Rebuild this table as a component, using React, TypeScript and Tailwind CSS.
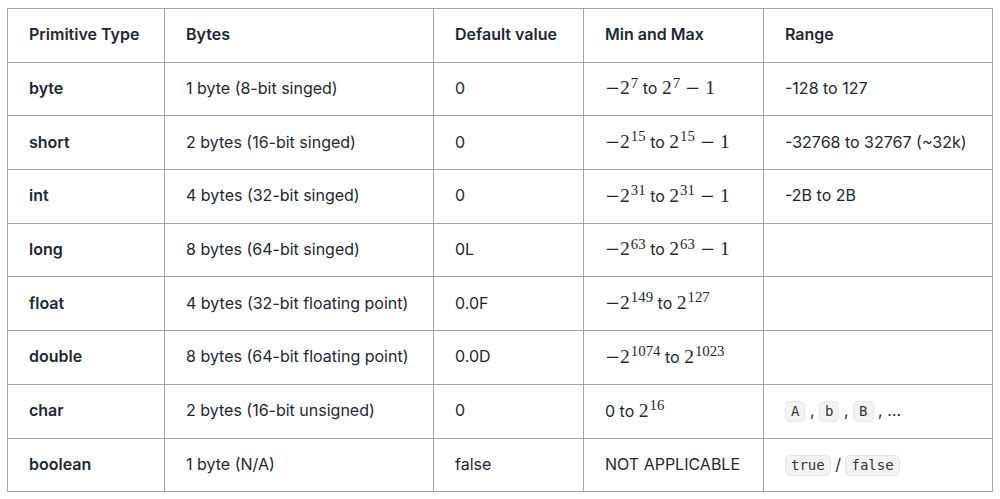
import React from 'react';

type Row = {
  type: string;
  bytes: string;
  def: string;
  minmax: React.ReactNode;
  range: React.ReactNode;
};

const Pow = ({ exp }: { exp: string }) => (
  <span>
    2<sup className="relative top-[0.05em] ml-[1px] align-super text-[0.76em] leading-none">{exp}</sup>
  </span>
);

const Math = ({ children }: { children: React.ReactNode }) => (
  <span className="text-[19.5px]" style={{ fontFamily: '"Liberation Serif", "DejaVu Serif", serif' }}>
    {children}
  </span>
);

const Minus = ({ binary = false }: { binary?: boolean }) => (
  <span
    className={binary ? 'mx-[5px] text-[18px] font-light' : 'text-[18px] font-light'}
    style={{ fontFamily: '"DejaVu Serif", serif' }}
  >
    −
  </span>
);

const MinMax = ({ lo, hi, minusOne = true }: { lo: string; hi: string; minusOne?: boolean }) => (
  <span>
    <Math>
      <Minus />
      <Pow exp={lo} />
    </Math>{' '}
    to{' '}
    <Math>
      <Pow exp={hi} />
      {minusOne && (
        <span>
          <Minus binary />1
        </span>
      )}
    </Math>
  </span>
);

const Code = ({ children }: { children: React.ReactNode }) => (
  <code
    className="inline-block rounded-[5px] border border-[#e3e3e3] bg-[#f3f3f3] px-[5px] text-[14px] leading-[19px] text-[#333]"
    style={{ fontFamily: '"DejaVu Sans Mono", "Liberation Mono", monospace' }}
  >
    {children}
  </code>
);

const rows: Row[] = [
  { type: 'byte', bytes: '1 byte (8-bit singed)', def: '0', minmax: <MinMax lo="7" hi="7" />, range: '-128 to 127' },
  { type: 'short', bytes: '2 bytes (16-bit singed)', def: '0', minmax: <MinMax lo="15" hi="15" />, range: '-32768 to 32767 (~32k)' },
  { type: 'int', bytes: '4 bytes (32-bit singed)', def: '0', minmax: <MinMax lo="31" hi="31" />, range: '-2B to 2B' },
  { type: 'long', bytes: '8 bytes (64-bit singed)', def: '0L', minmax: <MinMax lo="63" hi="63" />, range: '' },
  { type: 'float', bytes: '4 bytes (32-bit floating point)', def: '0.0F', minmax: <MinMax lo="149" hi="127" minusOne={false} />, range: '' },
  { type: 'double', bytes: '8 bytes (64-bit floating point)', def: '0.0D', minmax: <MinMax lo="1074" hi="1023" minusOne={false} />, range: '' },
  {
    type: 'char',
    bytes: '2 bytes (16-bit unsigned)',
    def: '0',
    minmax: (
      <span>
        0 to{' '}
        <Math>
          <Pow exp="16" />
        </Math>
      </span>
    ),
    range: (
      <span>
        <Code>A</Code> , <Code>b</Code> , <Code>B</Code> , …
      </span>
    ),
  },
  {
    type: 'boolean',
    bytes: '1 byte (N/A)',
    def: 'false',
    minmax: 'NOT APPLICABLE',
    range: (
      <span>
        <Code>true</Code> / <Code>false</Code>
      </span>
    ),
  },
];

const headers = ['Primitive Type', 'Bytes', 'Default value', 'Min and Max', 'Range'];

export default function App() {
  return (
    <div className="min-h-[499px] bg-white pl-[7px] pt-[8px]" style={{ fontFamily: 'Inter, "Noto Sans", sans-serif' }}>
      <table className="w-[985px] table-fixed border-collapse text-[16px] text-[#1f2733]">
        <colgroup>
          <col className="w-[157px]" />
          <col className="w-[269px]" />
          <col className="w-[150px]" />
          <col className="w-[180px]" />
          <col className="w-[229px]" />
        </colgroup>
        <thead>
          <tr className="h-[53.7px]">
            {headers.map(h => (
              <th key={h} className="border border-[#a6a6a6] px-[21px] pb-[2px] text-left font-semibold">
                {h}
              </th>
            ))}
          </tr>
        </thead>
        <tbody>
          {rows.map(r => (
            <tr key={r.type} className="h-[53.7px]">
              <td className="border border-[#a6a6a6] px-[21px] pb-[2px] font-semibold">{r.type}</td>
              <td className="border border-[#a6a6a6] px-[21px] pb-[2px]">{r.bytes}</td>
              <td className="border border-[#a6a6a6] px-[21px] pb-[2px]">{r.def}</td>
              <td className="border border-[#a6a6a6] px-[21px] pb-[2px]">{r.minmax}</td>
              <td className="border border-[#a6a6a6] px-[21px] pb-[2px]">{r.range}</td>
            </tr>
          ))}
        </tbody>
      </table>
    </div>
  );
}
